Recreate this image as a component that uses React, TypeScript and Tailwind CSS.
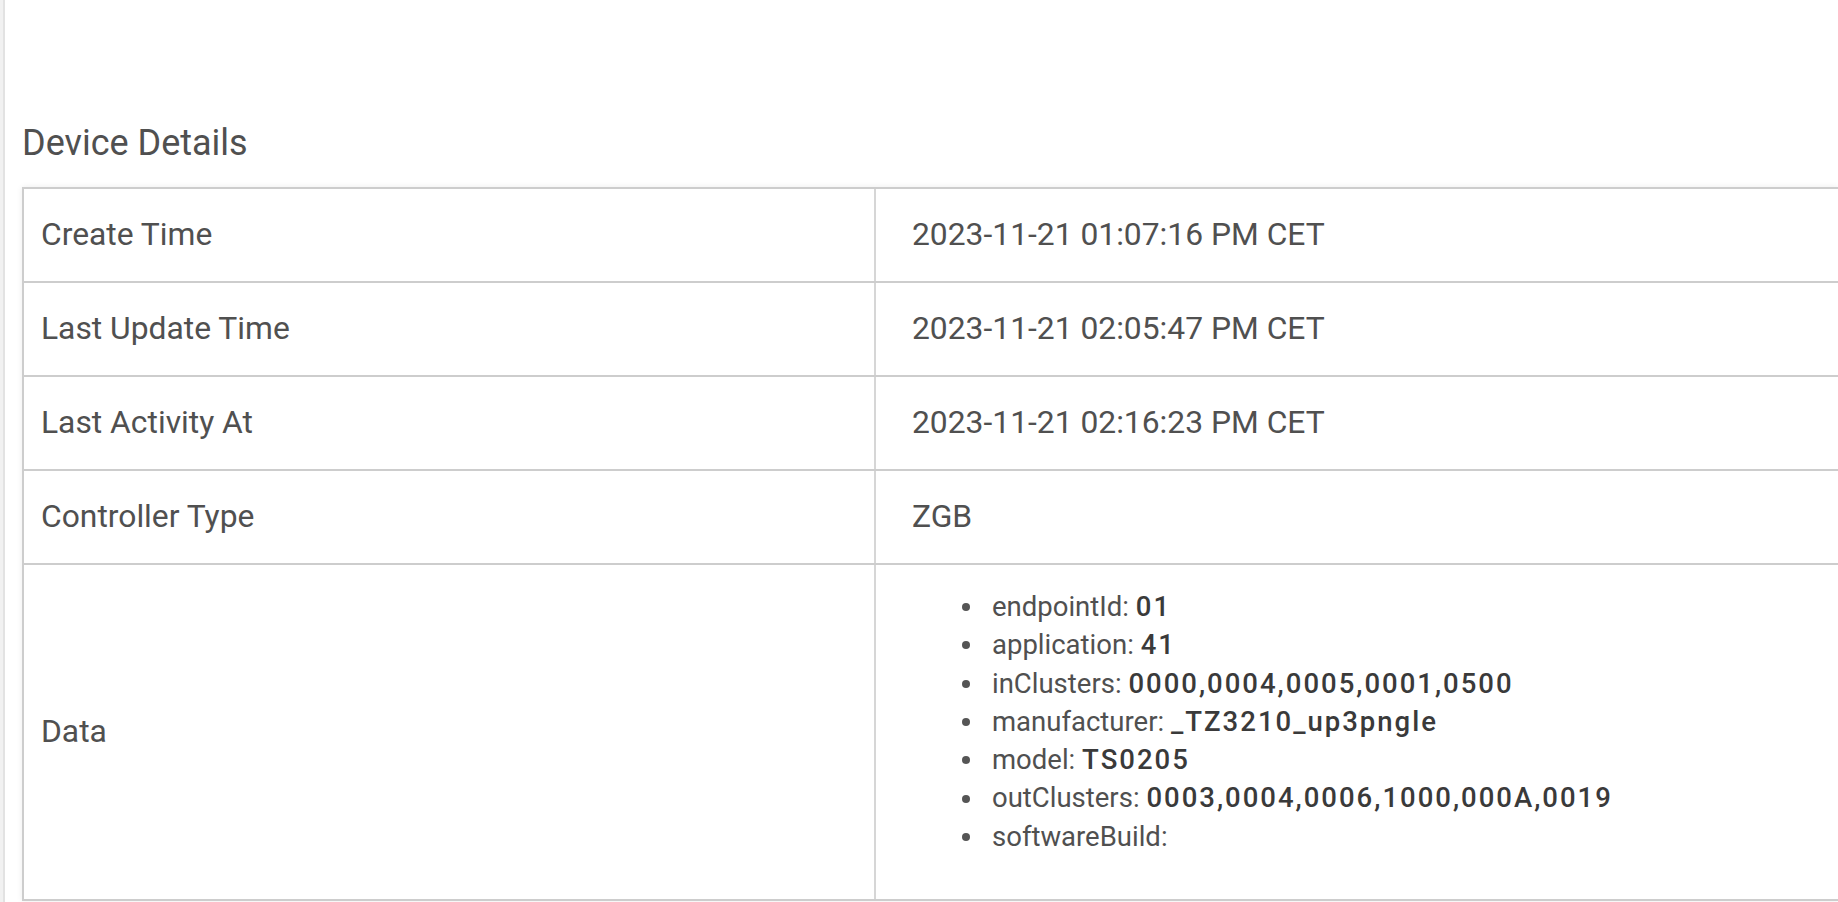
const rows = [
  { label: "Create Time", value: "2023-11-21 01:07:16 PM CET" },
  { label: "Last Update Time", value: "2023-11-21 02:05:47 PM CET" },
  { label: "Last Activity At", value: "2023-11-21 02:16:23 PM CET" },
  { label: "Controller Type", value: "ZGB" },
]

const data = [
  { key: "endpointId", value: "01" },
  { key: "application", value: "41" },
  { key: "inClusters", value: "0000,0004,0005,0001,0500" },
  { key: "manufacturer", value: "_TZ3210_up3pngle" },
  { key: "model", value: "TS0205" },
  { key: "outClusters", value: "0003,0004,0006,1000,000A,0019" },
  { key: "softwareBuild", value: "" },
]

const App = () => {
  return (
    <div className="min-h-screen w-full bg-white overflow-hidden flex font-['Roboto','Liberation_Sans',sans-serif] text-[#505050]">
      <div className="w-[3px] bg-[#f1f1f1]"></div>
      <div className="w-[2px] bg-[#e2e2e2]"></div>

      <main className="flex-1 pl-[17px] pt-[122px]">
        <h2 className="text-[36px] leading-[42px] font-normal mb-[23px]">Device Details</h2>

        <div className="border-t-2 border-l-2 border-[#cdcdcd] shadow-[0_0_6px_rgba(0,0,0,0.08)]">
          {rows.map((row) => (
            <div key={row.label} className="flex h-[94px] border-b-2 border-[#cdcdcd]">
              <div className="w-[852px] shrink-0 border-r-2 border-[#d6d6d6] pl-[17px] flex items-center text-[31.8px]">
                {row.label}
              </div>
              <div className="flex-1 pl-[36px] flex items-center text-[31.8px]">
                {row.value}
              </div>
            </div>
          ))}

          <div className="flex h-[336px] border-b-2 border-[#cdcdcd]">
            <div className="w-[852px] shrink-0 border-r-2 border-[#d6d6d6] pl-[17px] flex items-center text-[31.8px]">
              Data
            </div>
            <div className="flex-1 pl-[86px] pt-[23px]">
              <ul className="flex flex-col text-[27.5px] leading-[38.3px]">
                {data.map((item) => (
                  <li key={item.key} className="flex items-center gap-[22px]">
                    <span className="w-[8px] h-[8px] rounded-full bg-[#555555] shrink-0"></span>
                    <span>
                      {item.key}:{" "}
                      <span className="font-medium tracking-[2px] text-[#3a3a3a]">{item.value}</span>
                    </span>
                  </li>
                ))}
              </ul>
            </div>
          </div>
        </div>
      </main>
    </div>
  )
}

export default App
